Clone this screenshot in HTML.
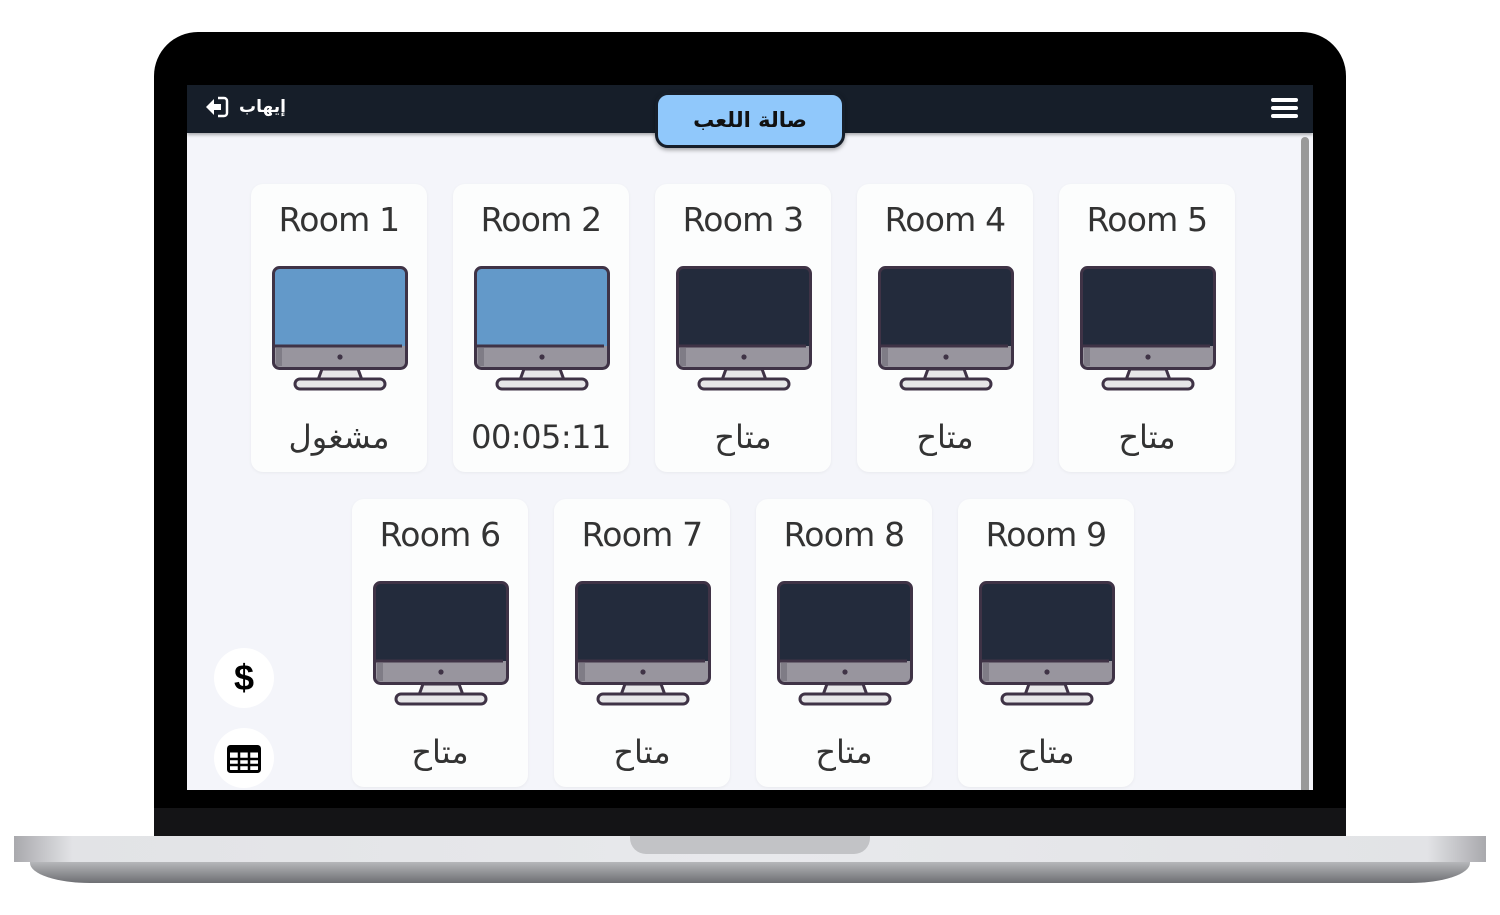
<!DOCTYPE html>
<html><head><meta charset="utf-8"><style>
*{margin:0;padding:0;box-sizing:border-box}
body{width:1500px;height:915px;background:#fff;position:relative;overflow:hidden;font-family:"Liberation Sans","DejaVu Sans",sans-serif}
.abs{position:absolute}
.bezel{left:154px;top:32px;width:1192px;height:806px;background:#000;border-radius:44px 44px 0 0}
.chin{left:154px;top:808px;width:1192px;height:30px;background:#141416}
.base{left:14px;top:836px;width:1472px;height:26px;background:linear-gradient(90deg,#a9a9ad 0%,#e2e3e6 4%,#e8e9ec 50%,#e2e3e6 96%,#a9a9ad 100%)}
.base2{left:30px;top:861px;width:1440px;height:22px;background:linear-gradient(#b9babd,#6e6f73);border-radius:0 0 60px 60px/0 0 20px 20px}
.notch{left:630px;top:836px;width:240px;height:18px;background:#c2c3c6;border-radius:0 0 16px 16px}
.screen{left:187px;top:85px;width:1126px;height:705px;background:#f4f5fa;overflow:hidden}
.hdr{left:0;top:0;width:1126px;height:48px;background:#161e29;box-shadow:0 2px 3px rgba(0,0,0,.3)}
.pill{left:468px;top:7px;width:190px;height:56px;background:#90c8fb;border:3px solid #161e29;border-radius:13px;text-align:center;line-height:50px;font-size:21px;font-family:"DejaVu Sans",sans-serif;color:#111;font-weight:bold;box-shadow:0 2px 4px rgba(0,0,0,.35)}
.card{width:176px;height:288px;background:#fcfdfd;border-radius:12px;box-shadow:0 1px 3px rgba(0,0,0,.05)}
.card .t{position:absolute;top:16px;width:100%;text-align:center;font-size:33px;color:#333;font-family:"DejaVu Sans",sans-serif;letter-spacing:-0.8px}
.card svg{position:absolute;left:21px;top:82px}
.card .s{position:absolute;top:234px;width:100%;text-align:center;font-size:32px;color:#333;font-family:"DejaVu Sans",sans-serif;letter-spacing:-0.5px}
.circ{width:60px;height:60px;border-radius:50%;background:#fff;left:27px}
.scroll{left:1114px;top:52px;width:8px;height:660px;background:#999;border-radius:4px}
</style></head><body>
<svg width="0" height="0" style="position:absolute"><defs>
<symbol id="mon" viewBox="0 0 136 126">
<rect x="1.5" y="1.5" width="133" height="101" rx="6" fill="var(--c)"/>
<path d="M1.5 80H134.5V96a6 6 0 0 1-6 6H7.5a6 6 0 0 1-6-6Z" fill="#98959e"/>
<rect x="4" y="82" width="6" height="18" fill="#7f7c86"/>
<line x1="3" y1="80" x2="130" y2="80" stroke="#3f3346" stroke-width="3"/>
<rect x="1.5" y="1.5" width="133" height="101" rx="6" fill="none" stroke="#3f3346" stroke-width="3"/>
<circle cx="68" cy="91" r="2.6" fill="#3f3346"/>
<path d="M50 103L46 114H90L86 103Z" fill="#e6e6e8" stroke="#3f3346" stroke-width="3" stroke-linejoin="round"/>
<rect x="23" y="113" width="90" height="10" rx="5" fill="#e6e6e8" stroke="#3f3346" stroke-width="3"/>
</symbol></defs></svg>
<div class="abs bezel"></div>
<div class="abs chin"></div>
<div class="abs base2"></div>
<div class="abs base"></div>
<div class="abs notch"></div>
<div class="abs screen">
 <div class="abs hdr"></div>
 <div class="abs" style="left:18px;top:11px;color:#fff;font-size:17px;font-family:'DejaVu Sans',sans-serif;font-weight:bold;display:flex;align-items:center;gap:10px">
  <svg width="24" height="22" viewBox="0 0 24 22"><path d="M13 2h6a3 3 0 0 1 3 3v12a3 3 0 0 1-3 3h-6" fill="none" stroke="#fff" stroke-width="2.5"/><path d="M1 11l8-8v5h7v6H9v5z" fill="#fff"/></svg><span>إيهاب</span></div>
 <div class="abs" style="left:1084px;top:13px;width:27px;height:4px;background:#fff;border-radius:2px"></div>
 <div class="abs" style="left:1084px;top:21px;width:27px;height:4px;background:#fff;border-radius:2px"></div>
 <div class="abs" style="left:1084px;top:29px;width:27px;height:4px;background:#fff;border-radius:2px"></div>
 <div class="abs pill">صالة اللعب</div>
 <div class="abs scroll"></div>

 <div class="abs card" style="left:64px;top:99px"><div class="t">Room 1</div><svg width="136" height="126" style="--c:#6399c9"><use href="#mon"/></svg><div class="s">مشغول</div></div>
 <div class="abs card" style="left:266px;top:99px"><div class="t">Room 2</div><svg width="136" height="126" style="--c:#6399c9"><use href="#mon"/></svg><div class="s">00:05:11</div></div>
 <div class="abs card" style="left:468px;top:99px"><div class="t">Room 3</div><svg width="136" height="126" style="--c:#232b3c"><use href="#mon"/></svg><div class="s">متاح</div></div>
 <div class="abs card" style="left:670px;top:99px"><div class="t">Room 4</div><svg width="136" height="126" style="--c:#232b3c"><use href="#mon"/></svg><div class="s">متاح</div></div>
 <div class="abs card" style="left:872px;top:99px"><div class="t">Room 5</div><svg width="136" height="126" style="--c:#232b3c"><use href="#mon"/></svg><div class="s">متاح</div></div>

 <div class="abs card" style="left:165px;top:414px"><div class="t">Room 6</div><svg width="136" height="126" style="--c:#232b3c"><use href="#mon"/></svg><div class="s">متاح</div></div>
 <div class="abs card" style="left:367px;top:414px"><div class="t">Room 7</div><svg width="136" height="126" style="--c:#232b3c"><use href="#mon"/></svg><div class="s">متاح</div></div>
 <div class="abs card" style="left:569px;top:414px"><div class="t">Room 8</div><svg width="136" height="126" style="--c:#232b3c"><use href="#mon"/></svg><div class="s">متاح</div></div>
 <div class="abs card" style="left:771px;top:414px"><div class="t">Room 9</div><svg width="136" height="126" style="--c:#232b3c"><use href="#mon"/></svg><div class="s">متاح</div></div>

 <div class="abs circ" style="top:563px;text-align:center;line-height:60px;font-size:36px;font-weight:bold;color:#000">$</div>
 <div class="abs circ" style="top:643px"><svg style="position:absolute;left:13px;top:17px" width="34" height="28" viewBox="0 0 34 28"><rect x="1.5" y="1.5" width="31" height="25" rx="2" fill="#fff" stroke="#000" stroke-width="3"/><rect x="1.5" y="1.5" width="31" height="6" fill="#000"/><path d="M12 2v24M22 2v24M2 14h30M2 20h30" stroke="#000" stroke-width="2.5"/></svg></div>
</div>
</body></html>
